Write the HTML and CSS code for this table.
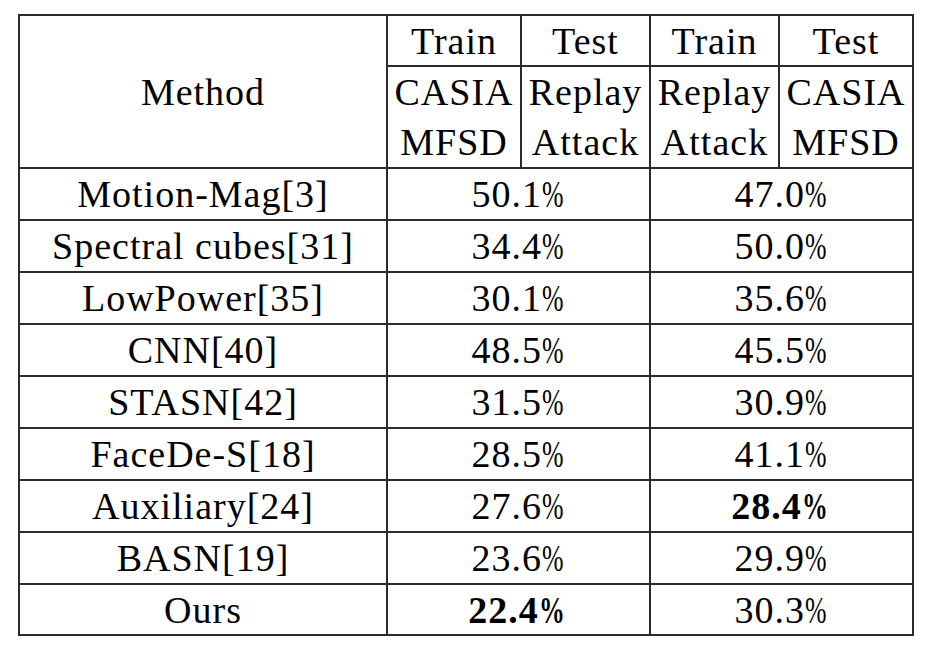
FILE: index.html
```html
<!DOCTYPE html>
<html>
<head>
<meta charset="utf-8">
<link rel="stylesheet" href="styles.css">
</head>
<body>
<div class="wrap">
<table class="results">
  <colgroup>
    <col class="c-method">
    <col class="c-a">
    <col class="c-b">
    <col class="c-b">
    <col class="c-a">
  </colgroup>
  <tr class="h1">
    <td rowspan="2">Method</td>
    <td>Train</td>
    <td>Test</td>
    <td>Train</td>
    <td>Test</td>
  </tr>
  <tr class="h2">
    <td>CASIA<br>MFSD</td>
    <td>Replay<br>Attack</td>
    <td>Replay<br>Attack</td>
    <td>CASIA<br>MFSD</td>
  </tr>
  <tr><td>Motion-Mag[3]</td><td colspan="2">50.1<span class="pct">%</span></td><td colspan="2">47.0<span class="pct">%</span></td></tr>
  <tr><td>Spectral cubes[31]</td><td colspan="2">34.4<span class="pct">%</span></td><td colspan="2">50.0<span class="pct">%</span></td></tr>
  <tr><td>LowPower[35]</td><td colspan="2">30.1<span class="pct">%</span></td><td colspan="2">35.6<span class="pct">%</span></td></tr>
  <tr><td>CNN[40]</td><td colspan="2">48.5<span class="pct">%</span></td><td colspan="2">45.5<span class="pct">%</span></td></tr>
  <tr><td>STASN[42]</td><td colspan="2">31.5<span class="pct">%</span></td><td colspan="2">30.9<span class="pct">%</span></td></tr>
  <tr><td>FaceDe-S[18]</td><td colspan="2">28.5<span class="pct">%</span></td><td colspan="2">41.1<span class="pct">%</span></td></tr>
  <tr><td>Auxiliary[24]</td><td colspan="2">27.6<span class="pct">%</span></td><td colspan="2" class="best">28.4<span class="pct">%</span></td></tr>
  <tr><td>BASN[19]</td><td colspan="2">23.6<span class="pct">%</span></td><td colspan="2">29.9<span class="pct">%</span></td></tr>
  <tr class="last"><td>Ours</td><td colspan="2" class="best">22.4<span class="pct">%</span></td><td colspan="2">30.3<span class="pct">%</span></td></tr>
</table>
</div>
</body>
</html>
```

FILE: styles.css
```css
html, body {
  margin: 0;
  padding: 0;
  background: #ffffff;
}

.wrap {
  padding: 14px 0 0 18px;
}

.results {
  border-collapse: collapse;
  table-layout: fixed;
  width: 896px;
  font-family: "Liberation Serif", "Times New Roman", serif;
  font-size: 38px;
  letter-spacing: 1px;
  color: #000;
  border: 2px solid #2b2b2b;
}

.c-method { width: 368px; }
.c-a { width: 134px; }
.c-b { width: 129px; }

.results td {
  border: 2px solid #2b2b2b;
  padding: 0;
  text-align: center;
  vertical-align: middle;
  height: 50px;
  line-height: 48px;
  white-space: nowrap;
}

.results .h1 td {
  height: 49px;
}

.results .h2 td {
  height: 99px;
  line-height: 50px;
}

.results .last td {
  height: 49px;
}

.pct {
  display: inline-block;
  transform: scaleX(0.68);
  transform-origin: left center;
  margin-right: -9px;
}

.best {
  font-weight: bold;
}
```
